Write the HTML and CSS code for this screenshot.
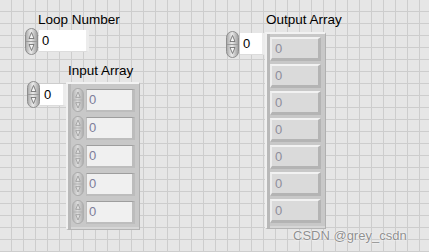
FILE: index.html
```html
<!DOCTYPE html>
<html lang="en">
<head>
    <meta charset="UTF-8">
    <title>Front Panel</title>
    <link rel="stylesheet" href="styles.css">
</head>
<body>
    <svg class="defs" width="0" height="0">
        <defs>
            <linearGradient id="spin-grad" x1="0" x2="1" y1="0" y2="0">
                <stop offset="0" stop-color="#a6a6a6"/>
                <stop offset="0.45" stop-color="#ebebeb"/>
                <stop offset="1" stop-color="#9c9c9c"/>
            </linearGradient>
            <symbol id="spin" viewBox="0 0 13 27">
                <rect x="0.5" y="0.5" width="12" height="26" rx="6" fill="url(#spin-grad)" stroke="#8e8e8e"/>
                <line x1="1" y1="13.5" x2="12" y2="13.5" stroke="#9a9a9a"/>
                <path d="M6.5 4.5 L9 10.5 H4 Z" fill="#f4f4f4" stroke="#666" stroke-width="0.8"/>
                <path d="M6.5 22.5 L9 16.5 H4 Z" fill="#f4f4f4" stroke="#666" stroke-width="0.8"/>
            </symbol>
        </defs>
    </svg>

    <div class="panel">
        <!-- Loop Number control -->
        <div class="ctl loop">
            <div class="label">Loop Number</div>
            <div class="numeric">
                <svg class="spinner"><use href="#spin"/></svg>
                <div class="box">0</div>
            </div>
        </div>

        <!-- Input Array control -->
        <div class="ctl input">
            <div class="label label-input">Input Array</div>
            <div class="array-row">
                <div class="numeric index">
                    <svg class="spinner"><use href="#spin"/></svg>
                    <div class="box">0</div>
                </div>
                <div class="frame frame-in">
                    <div class="elem"><svg class="spinner dim"><use href="#spin"/></svg><div class="ebox">0</div></div>
                    <div class="elem"><svg class="spinner dim"><use href="#spin"/></svg><div class="ebox">0</div></div>
                    <div class="elem"><svg class="spinner dim"><use href="#spin"/></svg><div class="ebox">0</div></div>
                    <div class="elem"><svg class="spinner dim"><use href="#spin"/></svg><div class="ebox">0</div></div>
                    <div class="elem"><svg class="spinner dim"><use href="#spin"/></svg><div class="ebox">0</div></div>
                </div>
            </div>
        </div>

        <!-- Output Array indicator -->
        <div class="ctl output">
            <div class="label label-output">Output Array</div>
            <div class="array-row">
                <div class="numeric index-out">
                    <svg class="spinner"><use href="#spin"/></svg>
                    <div class="box">0</div>
                </div>
                <div class="frame frame-out">
                    <div class="obox">0</div>
                    <div class="obox">0</div>
                    <div class="obox">0</div>
                    <div class="obox">0</div>
                    <div class="obox">0</div>
                    <div class="obox">0</div>
                    <div class="obox">0</div>
                </div>
            </div>
        </div>

        <div class="watermark">CSDN @grey_csdn</div>
    </div>
</body>
</html>
```

FILE: styles.css
```css
body {
    margin: 0;
    font-family: "Liberation Sans", Arial, sans-serif;
}

.defs {
    position: absolute;
    width: 0;
    height: 0;
}

.panel {
    position: relative;
    width: 429px;
    height: 252px;
    overflow: hidden;
    background-color: #e6e6e6;
    background-image:
        linear-gradient(to right, #cdcdcd 1px, transparent 1px),
        linear-gradient(to bottom, #cdcdcd 1px, transparent 1px);
    background-size: 12px 12px;
    background-position: 11px 11px;
}

.ctl {
    position: absolute;
}

.loop {
    left: 25px;
    top: 12px;
}

.input {
    left: 27px;
    top: 63px;
}

.output {
    left: 226px;
    top: 12px;
}

.label {
    font-size: 13.5px;
    color: #000;
    line-height: 16px;
    height: 16px;
}

.loop .label {
    padding-left: 13px;
}

.label-input {
    padding-left: 41px;
    height: 18px;
}

.label-output {
    padding-left: 40px;
    height: 19px;
}

.numeric {
    display: flex;
    align-items: flex-start;
}

.spinner {
    width: 13px;
    height: 27px;
    flex: none;
}

.spinner.dim {
    opacity: 0.55;
    width: 12px;
    height: 24px;
}

.box {
    margin-top: 2px;
    margin-left: 1px;
    width: 44px;
    height: 21px;
    background: #fff;
    border-right: 3px solid #ececec;
    border-bottom: 1px solid #dcdcdc;
    font-size: 13px;
    line-height: 21px;
    padding-left: 3px;
    color: #000;
}

.index .box {
    margin-top: 3px;
    margin-left: 0;
    width: 19px;
    padding-left: 4px;
}

.index-out .box {
    width: 19px;
    padding-left: 3px;
    margin-left: 1px;
}

.array-row {
    display: flex;
    align-items: flex-start;
}

.frame {
    background: #c8c8c8;
    border-top: 2px solid #f2f2f2;
    border-left: 2px solid #f0f0f0;
    border-right: 1px solid #b0b0b0;
    border-bottom: 1px solid #b4b4b4;
    box-shadow: inset 3px 0 0 #b9b9b9, inset 0 -2px 0 #d6d6d6;
    display: flex;
    flex-direction: column;
}

.frame-in {
    margin-top: 1px;
    width: 67px;
    height: 141px;
    padding: 4px 0 0 4px;
    gap: 4px;
}

.elem {
    display: flex;
    align-items: center;
    height: 24px;
}

.ebox {
    margin-left: 2px;
    width: 43px;
    height: 20px;
    background: #f0f0f0;
    border-top: 1px solid #9e9e9e;
    border-left: 1px solid #bdbdbd;
    border-right: 3px solid #bcbcbc;
    border-bottom: 2px solid #bdbdbd;
    font-size: 13px;
    line-height: 20px;
    padding-left: 2px;
    color: #7d7d9a;
}

.frame-out {
    margin-top: 1px;
    width: 55px;
    height: 191px;
    padding: 3px 0 0 3px;
    gap: 3px;
}

.obox {
    width: 43px;
    height: 19px;
    background: #dadada;
    border-top: 2px solid #f2f2f2;
    border-left: 2px solid #ededed;
    border-right: 3px solid #b4b4b4;
    border-bottom: 3px solid #b4b4b4;
    font-size: 13px;
    line-height: 19px;
    padding-left: 3px;
    color: #8e8e9c;
}

.watermark {
    position: absolute;
    left: 293px;
    top: 228px;
    font-size: 13px;
    color: #8f8f8f;
    text-shadow: 0 0 2px #fff, 0 0 1px #fff;
}
```
